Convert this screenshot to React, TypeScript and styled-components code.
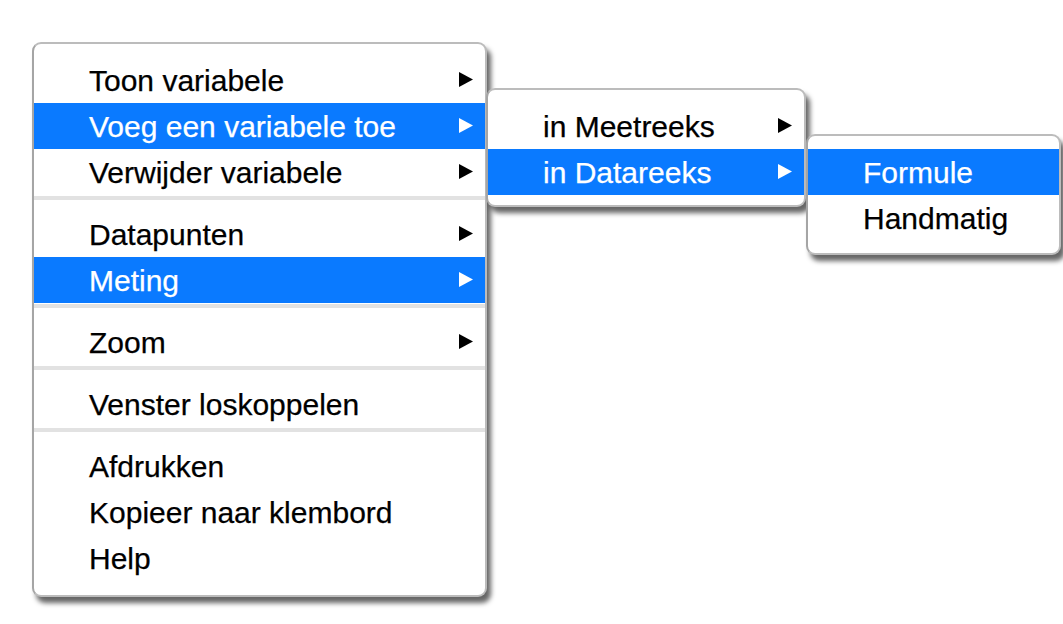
import React from "react";
import styled, { createGlobalStyle } from "styled-components";

const Global = createGlobalStyle`
  html, body { margin: 0; padding: 0; background: #ffffff; }
  body { font-family: "Liberation Sans", Arial, Helvetica, sans-serif; }
`;

const Page = styled.div`
  position: relative;
  width: 1063px;
  height: 624px;
  padding: 42px 0 0 32px;
  box-sizing: border-box;
  overflow: hidden;
`;

const Menu = styled.div<{ $w: number; $pb: number; $top?: number; $left?: number; $z?: number }>`
  position: ${(p) => (p.$top !== undefined ? "absolute" : "relative")};
  ${(p) => (p.$top !== undefined ? `top: ${p.$top}px; left: ${p.$left}px;` : "")}
  z-index: ${(p) => p.$z ?? 1};
  width: ${(p) => p.$w}px;
  box-sizing: border-box;
  background: #ffffff;
  border: 2px solid #bcbcbc;
  border-left-color: #a5a5a5;
  border-radius: 9px;
  padding: 13px 0 ${(p) => p.$pb}px 0;
  display: flex;
  flex-direction: column;
  box-shadow: 4px 6px 5px rgba(0, 0, 0, 0.6);
`;

const Item = styled.div<{ $active?: boolean }>`
  height: 46px;
  display: flex;
  align-items: center;
  justify-content: space-between;
  padding: 0 12px 0 55px;
  font-size: 30px;
  color: ${(p) => (p.$active ? "#ffffff" : "#000000")};
  background: ${(p) => (p.$active ? "#0a7aff" : "transparent")};
  white-space: nowrap;
  -webkit-text-stroke: 0.25px ${(p) => (p.$active ? "#ffffff" : "#000000")};
`;

const Label = styled.span`
  line-height: 46px;
  margin-top: 2px;
`;

const Separator = styled.div`
  height: 4px;
  margin: 1px 0 11px 0;
  background: #e2e2e2;
`;

const ArrowSvg = styled.svg`
  width: 14px;
  height: 15px;
  flex: none;
  margin-top: -1px;
`;

const Arrow = ({ white }: { white?: boolean }) => (
  <ArrowSvg viewBox="0 0 14 15">
    <polygon points="0,0 14,7.5 0,15" fill={white ? "#ffffff" : "#000000"} />
  </ArrowSvg>
);

type Entry = { label: string; sub?: boolean; active?: boolean } | "sep";

const MenuItems = ({ items }: { items: Entry[] }) => (
  <>
    {items.map((it, i) =>
      it === "sep" ? (
        <Separator key={i} />
      ) : (
        <Item key={i} $active={it.active}>
          <Label>{it.label}</Label>
          {it.sub && <Arrow white={it.active} />}
        </Item>
      )
    )}
  </>
);

const mainItems: Entry[] = [
  { label: "Toon variabele", sub: true },
  { label: "Voeg een variabele toe", sub: true, active: true },
  { label: "Verwijder variabele", sub: true },
  "sep",
  { label: "Datapunten", sub: true },
  { label: "Meting", sub: true, active: true },
  "sep",
  { label: "Zoom", sub: true },
  "sep",
  { label: "Venster loskoppelen" },
  "sep",
  { label: "Afdrukken" },
  { label: "Kopieer naar klembord" },
  { label: "Help" },
];

const sub1Items: Entry[] = [
  { label: "in Meetreeks", sub: true },
  { label: "in Datareeks", sub: true, active: true },
];

const sub2Items: Entry[] = [
  { label: "Formule", active: true },
  { label: "Handmatig" },
];

export default function App() {
  return (
    <Page>
      <Global />
      <Menu $w={455} $pb={14} $z={1}>
        <MenuItems items={mainItems} />
      </Menu>
      <Menu $w={320} $pb={10} $top={88} $left={486} $z={2}>
        <MenuItems items={sub1Items} />
      </Menu>
      <Menu $w={255} $pb={12} $top={134} $left={806} $z={3}>
        <MenuItems items={sub2Items} />
      </Menu>
    </Page>
  );
}
